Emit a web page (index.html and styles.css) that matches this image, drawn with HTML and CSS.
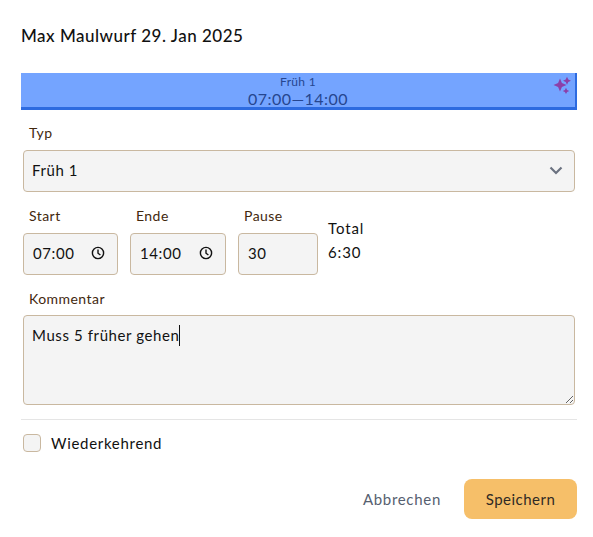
FILE: index.html
```html
<!DOCTYPE html>
<html lang="en">
<head>
    <meta charset="UTF-8">
    <meta name="viewport" content="width=device-width, initial-scale=1.0">
    <title>Schicht bearbeiten</title>
    <link rel="stylesheet" href="styles.css">
</head>
<body>
    <main class="dialog">
        <h1 class="title">Max Maulwurf 29. Jan 2025</h1>

        <div class="shift-bar">
            <span class="shift-name">Früh 1</span>
            <span class="shift-time">07:00—14:00</span>
            <svg class="sparkles" width="18" height="18" viewBox="0 0 18 18" fill="#8c3fa8">
                <path d="M7 2.5 L8.9 7.1 L13.5 9 L8.9 10.9 L7 15.5 L5.1 10.9 L0.5 9 L5.1 7.1 Z"/>
                <path d="M14 0.7 L15.3 3.4 L18 4.7 L15.3 6 L14 8.7 L12.7 6 L10 4.7 L12.7 3.4 Z"/>
                <path d="M13 11.7 L14.1 13.9 L16.3 15 L14.1 16.1 L13 18 L11.9 16.1 L9.7 15 L11.9 13.9 Z"/>
            </svg>
        </div>

        <label class="label type-label">Typ</label>
        <div class="field select-field">
            <span>Früh 1</span>
            <svg width="14" height="9" viewBox="0 0 14 9" fill="none" stroke="#6b7280" stroke-width="2.2">
                <path d="M1.5 1.5 L7 7 L12.5 1.5"/>
            </svg>
        </div>

        <div class="time-row">
            <div class="time-col start-col">
                <label class="label">Start</label>
                <div class="field time-field">
                    <span>07:00</span>
                    <svg width="14" height="14" viewBox="0 0 14 14" fill="none" stroke="#111" stroke-width="1.4">
                        <circle cx="7" cy="7" r="5.6"/>
                        <path d="M7 3.6 V7.2 L9.4 9"/>
                    </svg>
                </div>
            </div>
            <div class="time-col end-col">
                <label class="label">Ende</label>
                <div class="field time-field">
                    <span>14:00</span>
                    <svg width="14" height="14" viewBox="0 0 14 14" fill="none" stroke="#111" stroke-width="1.4">
                        <circle cx="7" cy="7" r="5.6"/>
                        <path d="M7 3.6 V7.2 L9.4 9"/>
                    </svg>
                </div>
            </div>
            <div class="time-col pause-col">
                <label class="label">Pause</label>
                <div class="field time-field">
                    <span>30</span>
                </div>
            </div>
            <div class="total">
                <span>Total</span>
                <span>6:30</span>
            </div>
        </div>

        <label class="label comment-label">Kommentar</label>
        <div class="comment-wrap">
            <textarea class="field comment">Muss 5 früher gehen</textarea>
            <span class="caret"></span>
        </div>

        <hr class="divider">

        <div class="check-row">
            <span class="checkbox"></span>
            <span>Wiederkehrend</span>
        </div>

        <div class="actions">
            <button class="btn btn-cancel">Abbrechen</button>
            <button class="btn btn-save">Speichern</button>
        </div>
    </main>
</body>
</html>
```

FILE: styles.css
```css
body {
    font-family: 'Lato', 'Noto Sans', sans-serif;
    margin: 0;
    background: #fff;
    color: #111;
}

.dialog {
    padding: 26px 16px 0 21px;
}

.title {
    margin: 0;
    font-size: 17px;
    font-weight: 500;
    line-height: 20px;
    letter-spacing: 0.5px;
}

.shift-bar {
    position: relative;
    box-sizing: border-box;
    height: 37px;
    margin-top: 27px;
    background-color: #74a4ff;
    border-right: 2px solid #2d6be0;
    border-bottom: 3px solid #2d6be0;
    color: #26468f;
    display: flex;
    flex-direction: column;
    align-items: center;
    text-align: center;
}

.shift-name {
    font-size: 12px;
    line-height: 16px;
    margin-top: 1px;
    letter-spacing: 0.3px;
}

.shift-time {
    font-size: 16px;
    line-height: 18px;
    letter-spacing: 0.45px;
}

.sparkles {
    position: absolute;
    top: 3px;
    right: 4px;
}

.label {
    display: block;
    font-size: 14px;
    line-height: 18px;
    color: #42280e;
    padding-left: 8px;
    letter-spacing: 0.45px;
}

.type-label {
    margin-top: 14px;
    margin-bottom: 8px;
}

.field {
    box-sizing: border-box;
    background-color: #f4f4f4;
    border: 1px solid #c9b8a0;
    border-radius: 4px;
    color: #111;
    font-family: inherit;
    font-size: 15px;
    letter-spacing: 0.6px;
    display: flex;
    align-items: center;
}

.select-field {
    width: 552px;
    height: 42px;
    margin-left: 2px;
    padding: 0 11px 2px 8px;
    justify-content: space-between;
}

.time-row {
    display: flex;
    margin-top: 15px;
    margin-left: 2px;
}

.time-col .label {
    padding-left: 6px;
    margin-bottom: 8px;
}

.start-col {
    width: 95px;
    margin-right: 12px;
}

.end-col {
    width: 96px;
    margin-right: 12px;
}

.pause-col {
    width: 80px;
    margin-right: 10px;
}

.time-field {
    height: 42px;
    padding: 0 12px 2px 9px;
    justify-content: space-between;
}

.total {
    display: flex;
    flex-direction: column;
    gap: 5px;
    padding-top: 12px;
    font-size: 15px;
    line-height: 19px;
    letter-spacing: 0.9px;
}

.comment-label {
    margin-top: 15px;
    margin-bottom: 7px;
}

.comment-wrap {
    position: relative;
    margin-left: 2px;
    width: 552px;
    height: 90px;
}

.comment {
    display: block;
    width: 100%;
    height: 100%;
    margin: 0;
    padding: 9px 8px;
    line-height: 20px;
    outline: none;
}

.caret {
    position: absolute;
    left: 156px;
    top: 10px;
    width: 1px;
    height: 21px;
    background: #111;
}

.divider {
    border: none;
    border-top: 1px solid #e5e5e5;
    margin: 14px 0 0;
}

.check-row {
    display: flex;
    align-items: center;
    gap: 10px;
    margin-top: 14px;
    margin-left: 2px;
    font-size: 15px;
    line-height: 18px;
    letter-spacing: 0.7px;
}

.checkbox {
    box-sizing: border-box;
    width: 18px;
    height: 18px;
    background-color: #f4f4f4;
    border: 1px solid #c9b8a0;
    border-radius: 4px;
}

.actions {
    display: flex;
    justify-content: flex-end;
    align-items: center;
    gap: 23px;
    margin-top: 27px;
}

.btn {
    font-family: inherit;
    font-size: 15px;
    letter-spacing: 0.5px;
    border: none;
    cursor: pointer;
    height: 40px;
    border-radius: 8px;
}

.btn-cancel {
    background: none;
    color: #566070;
    padding: 0;
    letter-spacing: 0.7px;
}

.btn-save {
    width: 113px;
    background-color: #f6bf69;
    color: #2f2a25;
}
```
